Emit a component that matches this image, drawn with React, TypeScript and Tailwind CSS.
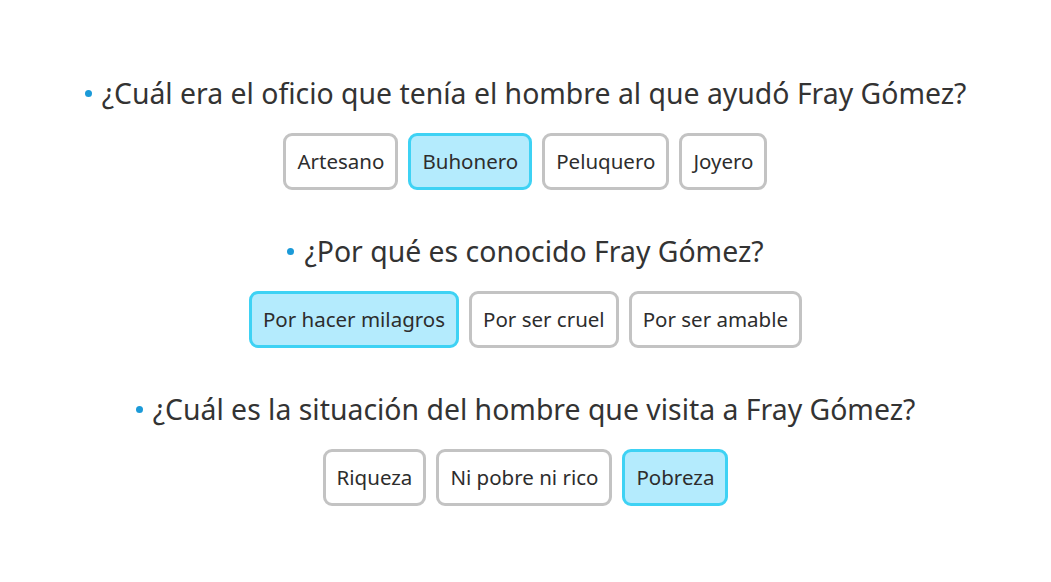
import React from 'react';

type Question = {
  text: string;
  options: string[];
  selected: string;
};

const questions: Question[] = [
  {
    text: '¿Cuál era el oficio que tenía el hombre al que ayudó Fray Gómez?',
    options: ['Artesano', 'Buhonero', 'Peluquero', 'Joyero'],
    selected: 'Buhonero',
  },
  {
    text: '¿Por qué es conocido Fray Gómez?',
    options: ['Por hacer milagros', 'Por ser cruel', 'Por ser amable'],
    selected: 'Por hacer milagros',
  },
  {
    text: '¿Cuál es la situación del hombre que visita a Fray Gómez?',
    options: ['Riqueza', 'Ni pobre ni rico', 'Pobreza'],
    selected: 'Pobreza',
  },
];

export default function App() {
  return (
    <div
      className="w-[1051px] h-[582px] bg-white text-[#333333] flex flex-col items-center pt-[74px]"
      style={{ fontFamily: '"Noto Sans", "Open Sans", sans-serif' }}
    >
      {questions.map((q) => (
        <div key={q.text} className="flex flex-col items-center mb-[42px]">
          {/* Question */}
          <div className="flex items-center h-[38px] text-[28.4px] leading-[38px]">
            <span className="w-[7px] h-[7px] rounded-full bg-[#1b9ad8] mr-[10px] mt-[1px]" />
            <span>{q.text}</span>
          </div>

          {/* Options */}
          <div className="flex gap-[10px] mt-[21px]">
            {q.options.map((opt) => {
              const active = opt === q.selected;
              return (
                <button
                  key={opt}
                  className={
                    active
                      ? 'h-[57px] px-[11px] rounded-[9px] border-[3px] border-[#3ed2f4] bg-[#b4ebfd] text-[20.5px] text-[#2d2d2d]'
                      : 'h-[57px] px-[11px] rounded-[9px] border-[3px] border-[#c3c3c3] bg-white text-[20.5px] text-[#2d2d2d]'
                  }
                >
                  {opt}
                </button>
              );
            })}
          </div>
        </div>
      ))}
    </div>
  );
}
